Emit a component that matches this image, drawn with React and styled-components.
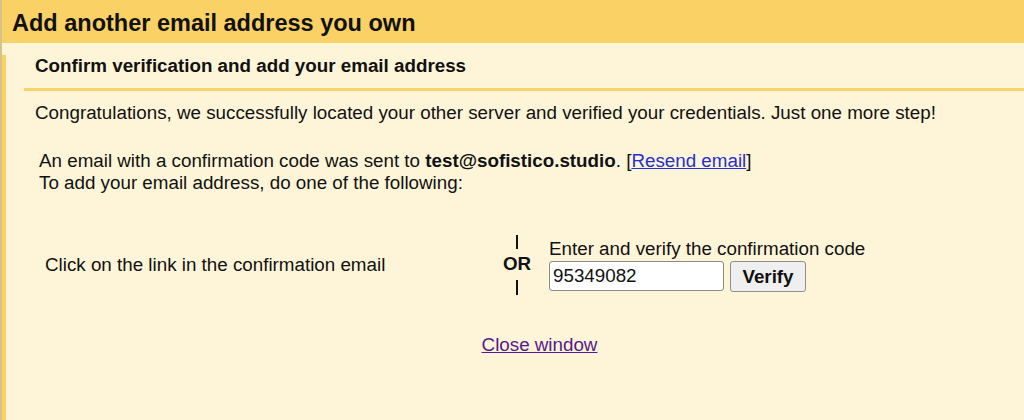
import React, {useState} from 'react';
import styled, {createGlobalStyle} from "styled-components";

const GlobalStyle = createGlobalStyle`
  html, body {
    margin: 0;
    padding: 0;
    background: #fef5d8;
  }
  body {
    font-family: "Liberation Sans", Arial, sans-serif;
    color: #111;
  }
`

const Frame = styled.div`
  min-height: 420px;
  box-sizing: border-box;
  border-left: 2px solid #d6c38c;
  background: #fef5d8;
`

const Header = styled.div`
  height: 43px;
  box-sizing: border-box;
  padding: 3px 0 0 10px;
  background: #fad165;
  font-size: 23.5px;
  font-weight: bold;
  line-height: 40px;
`

const Body = styled.div`
  border-left: 4px solid #fad165;
  min-height: 377px;
  box-sizing: border-box;
`

const Subheader = styled.div`
  margin: 12px 0 0 18px;
  padding: 0 0 11px 11px;
  border-bottom: 3px solid #f8d36d;
  font-size: 18.8px;
  font-weight: bold;
  line-height: 22px;
`

const Content = styled.div`
  padding-left: 29px;
  font-size: 18.8px;
  line-height: 22px;
`

const Para = styled.p`
  margin: ${p => p.$top || 0}px 0 0 0;
  padding-left: ${p => p.$indent || 0}px;
`

const Link = styled.a`
  color: ${p => p.$visited ? "#551a8b" : "#2530d0"};
  text-decoration: underline;
  cursor: pointer;
`

const Choices = styled.div`
  display: flex;
  align-items: center;
  margin-top: 41px;
`

const ChoiceCell = styled.div`
  width: 468px;
  padding-left: 10px;
  box-sizing: border-box;
`

const OrColumn = styled.div`
  display: flex;
  flex-direction: column;
  align-items: center;
  width: 28px;
  margin-right: 18px;
  font-weight: bold;
`

const Bar = styled.span`
  width: 2px;
  height: ${p => p.$h}px;
  background: #111;
  margin: ${p => p.$m};
`

const CodeColumn = styled.div`
  display: flex;
  flex-direction: column;
`

const CodeRow = styled.div`
  display: flex;
  gap: 6px;
  margin-top: 1px;
`

const CodeInput = styled.input`
  width: 175px;
  height: 30px;
  box-sizing: border-box;
  padding: 0 3px;
  border: 1px solid #8a8a8a;
  border-radius: 3px;
  background: #fff;
  font-family: inherit;
  font-size: 18.8px;
  color: #111;
  outline: none;
`

const VerifyButton = styled.button`
  width: 76px;
  height: 31px;
  box-sizing: border-box;
  border: 1px solid #8f8f8f;
  border-radius: 3px;
  background: #efefef;
  font-family: inherit;
  font-size: 18.8px;
  font-weight: bold;
  color: #111;
  padding: 0;
`

const Footer = styled.div`
  margin-top: 39px;
  padding-left: 20px;
  text-align: center;
`

export default function App() {
    const [code, setCode] = useState("95349082");
    return (
        <Frame>
            <GlobalStyle/>
            <Header>Add another email address you own</Header>
            <Body>
                <Subheader>Confirm verification and add your email address</Subheader>
                <Content>
                    <Para $top={11}>
                        Congratulations, we successfully located your other server and verified your credentials. Just one more step!
                    </Para>
                    <Para $top={26} $indent={4}>
                        An email with a confirmation code was sent to <b>test@sofistico.studio</b>. [<Link>Resend email</Link>]
                        <br/>
                        To add your email address, do one of the following:
                    </Para>
                    <Choices>
                        <ChoiceCell>Click on the link in the confirmation email</ChoiceCell>
                        <OrColumn>
                            <Bar $h={14} $m="0 0 4px 0"/>
                            OR
                            <Bar $h={15} $m="5px 0 0 0"/>
                        </OrColumn>
                        <CodeColumn>
                            Enter and verify the confirmation code
                            <CodeRow>
                                <CodeInput value={code} onChange={e => setCode(e.target.value)}/>
                                <VerifyButton>Verify</VerifyButton>
                            </CodeRow>
                        </CodeColumn>
                    </Choices>
                    <Footer>
                        <Link $visited>Close window</Link>
                    </Footer>
                </Content>
            </Body>
        </Frame>
    )
}
